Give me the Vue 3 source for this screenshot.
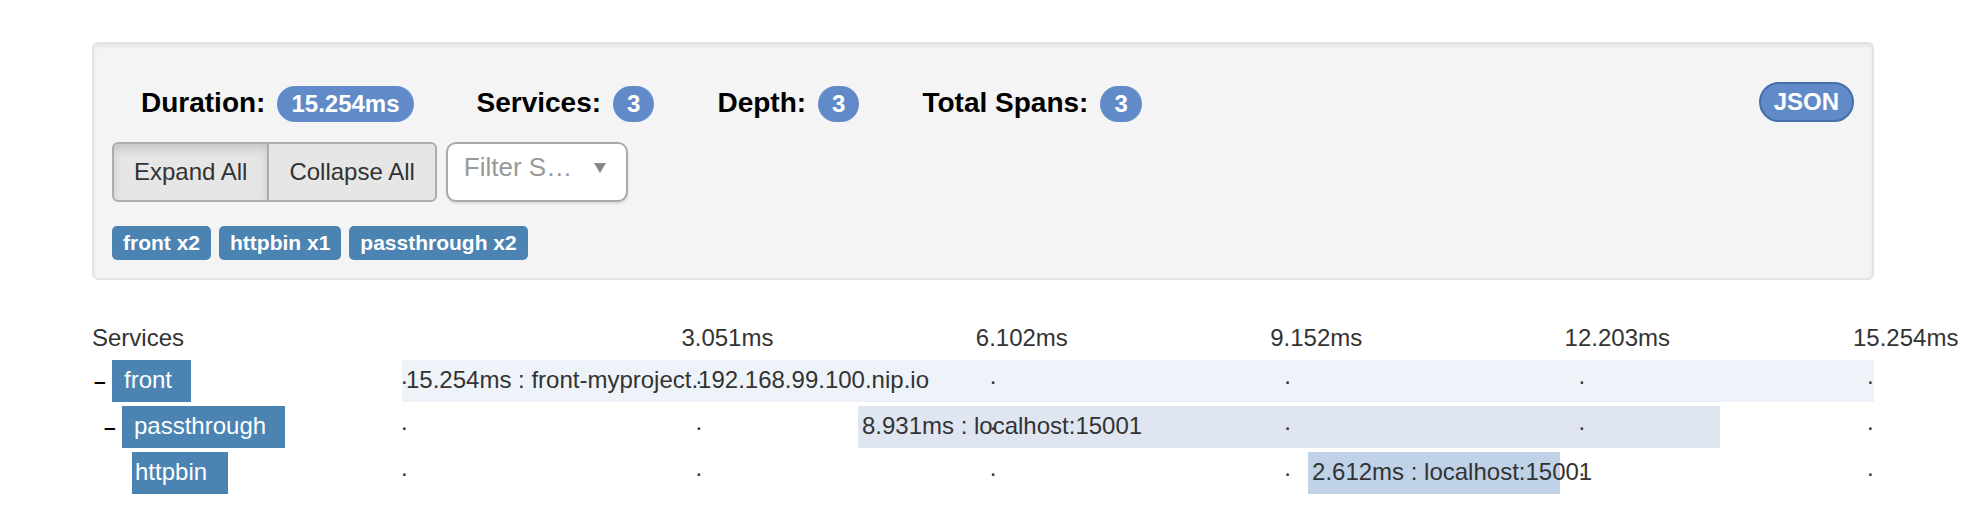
<script setup>
import { ref, computed } from 'vue'

const stats = [
  { label: 'Duration:', value: '15.254ms' },
  { label: 'Services:', value: '3' },
  { label: 'Depth:', value: '3' },
  { label: 'Total Spans:', value: '3' },
]

const tags = ['front x2', 'httpbin x1', 'passthrough x2']
const ticks = ['', '3.051ms', '6.102ms', '9.152ms', '12.203ms', '15.254ms']

const total = 15.254
const spans = [
  { name: 'front', start: 0, duration: 15.254, text: '15.254ms : front-myproject.192.168.99.100.nip.io', parent: true },
  { name: 'passthrough', start: 4.725, duration: 8.931, text: '8.931ms : localhost:15001', parent: true },
  { name: 'httpbin', start: 9.389, duration: 2.612, text: '2.612ms : localhost:15001', parent: false },
]

// Rows deeper than openDepth are hidden.
const openDepth = ref(spans.length - 1)
const visibleSpans = computed(() => spans.slice(0, openDepth.value + 1))
const expanded = computed(() => openDepth.value === spans.length - 1)

function toggle(depth) {
  openDepth.value = openDepth.value > depth ? depth : spans.length - 1
}

function barStyle(span) {
  return {
    marginLeft: (span.start / total) * 100 + '%',
    width: (span.duration / total) * 100 + '%',
  }
}
</script>

<template>
  <main class="page">
    <section class="panel">
      <div class="summary">
        <div v-for="s in stats" :key="s.label" class="stat">
          <span class="stat-label">{{ s.label }}</span>
          <span class="badge">{{ s.value }}</span>
        </div>
        <a class="json" href="#json">JSON</a>
      </div>

      <div class="controls">
        <div class="button-group">
          <button type="button" :class="{ active: expanded }" @click="openDepth = spans.length - 1">Expand All</button>
          <button type="button" :class="{ active: !expanded }" @click="openDepth = 0">Collapse All</button>
        </div>
        <div class="filter">
          <select aria-label="Filter services">
            <option>Filter S…</option>
          </select>
          <svg class="arrow" viewBox="0 0 12 10" aria-hidden="true"><path d="M0 0H12L6 10Z" /></svg>
        </div>
      </div>

      <div class="tags">
        <span v-for="t in tags" :key="t" class="tag">{{ t }}</span>
      </div>
    </section>

    <section class="timeline">
      <div class="row header">
        <div class="service">Services</div>
        <div class="ticks">
          <span v-for="(t, i) in ticks" :key="i">{{ t }}</span>
        </div>
      </div>

      <div v-for="(span, i) in visibleSpans" :key="span.name" class="row" :class="'depth-' + i">
        <div class="service">
          <button v-if="span.parent" class="toggle" type="button" :aria-label="'Toggle ' + span.name" @click="toggle(i)">–</button>
          <span class="name" :class="{ leaf: !span.parent }">{{ span.name }}</span>
        </div>
        <div class="track">
          <div class="bar" :style="barStyle(span)">{{ span.text }}</div>
          <div class="dots"><span v-for="(t, n) in ticks" :key="n">.</span></div>
        </div>
      </div>
    </section>
  </main>
</template>

<style>
body {
  background: #fff;
}
</style>

<style scoped>
.page {
  padding: 42px 92px 34px;
  font-family: "Liberation Sans", Arial, sans-serif;
  font-size: 24px;
  color: #333;
}

.panel {
  display: flex;
  flex-direction: column;
  padding: 38px 18px 18px;
  border: 2px solid #e3e3e3;
  border-radius: 6px;
  background: #f4f4f4;
  box-shadow: inset 0 2px 4px rgba(0, 0, 0, 0.07);
}

.summary {
  display: flex;
  align-items: flex-end;
  gap: 63px;
  padding-left: 29px;
}

.stat {
  display: flex;
  align-items: baseline;
  gap: 12px;
  line-height: 36px;
}

.stat-label {
  font-size: 28px;
  font-weight: bold;
  color: #000;
}

.badge {
  padding: 0 14px;
  border-radius: 18px;
  background: #618bc8;
  color: #fff;
  font-weight: bold;
}

.json {
  margin-left: auto;
  padding: 0 13px;
  border: 2px solid #446fa8;
  border-radius: 20px;
  background: #618bc8;
  color: #fff;
  font-weight: bold;
  line-height: 36px;
  text-decoration: none;
}

.controls {
  display: flex;
  gap: 9px;
  margin-top: 20px;
}

.button-group {
  display: flex;
}

.button-group button {
  height: 60px;
  padding: 0 20px;
  border: 2px solid #adadad;
  background: #e6e6e6;
  color: #333;
  font: inherit;
}

.button-group button:first-child {
  border-radius: 6px 0 0 6px;
}

.button-group button:last-child {
  margin-left: -2px;
  border-radius: 0 6px 6px 0;
}

.button-group .active {
  box-shadow: inset 0 6px 10px rgba(0, 0, 0, 0.125);
}

.filter {
  position: relative;
}

.filter select {
  width: 182px;
  height: 60px;
  padding: 0 16px 10px;
  border: 2px solid #aaa;
  border-radius: 10px;
  background: #fff;
  box-shadow: 0 2px 2px rgba(0, 0, 0, 0.1);
  color: #999;
  font: inherit;
  font-size: 26px;
  appearance: none;
}

.arrow {
  position: absolute;
  top: 21px;
  right: 22px;
  width: 12px;
  height: 10px;
  fill: #888;
  pointer-events: none;
}

.tags {
  display: flex;
  gap: 8px;
  margin-top: 24px;
}

.tag {
  padding: 0 11px;
  border-radius: 5px;
  background: #4b83b3;
  color: #fff;
  font-size: 21px;
  font-weight: bold;
  line-height: 34px;
}

.timeline {
  display: flex;
  flex-direction: column;
  gap: 4px;
  margin-top: 38px;
}

.row {
  display: flex;
  height: 42px;
  line-height: 40px;
}

.header {
  height: 38px;
  line-height: 40px;
}

.service {
  display: flex;
  flex: 0 0 310px;
}

.depth-1 .service {
  box-sizing: border-box;
  padding-left: 10px;
}

.depth-2 .service {
  box-sizing: border-box;
  padding-left: 40px;
}

.toggle {
  width: 20px;
  padding: 0 0 0 2px;
  border: 0;
  background: none;
  color: #000;
  font: inherit;
  font-size: 21px;
  font-weight: bold;
  text-align: left;
}

.name {
  padding: 0 19px 0 12px;
  background: #4b83b3;
  color: #fff;
}

.leaf {
  padding: 0 21px 0 3px;
}

.ticks,
.dots {
  display: grid;
  grid-template-columns: repeat(5, minmax(0, 1fr)) 0;
  white-space: nowrap;
}

.ticks {
  flex: 1;
}

.ticks span {
  margin-left: -15px;
}

.ticks span:last-child {
  margin-left: -21px;
}

.track {
  display: grid;
  flex: 1;
  grid-template-columns: minmax(0, 1fr);
}

.bar,
.dots {
  grid-area: 1 / 1;
}

.bar {
  box-sizing: border-box;
  padding-left: 4px;
  background: #edf3f8;
  white-space: nowrap;
}

.depth-1 .bar {
  background: #dfe6f2;
}

.depth-2 .bar {
  background: #c0d2e7;
}

.dots {
  line-height: 32px;
  pointer-events: none;
}

.dots span {
  margin-left: -1px;
}

.dots span:last-child {
  margin-left: -7px;
}
</style>
